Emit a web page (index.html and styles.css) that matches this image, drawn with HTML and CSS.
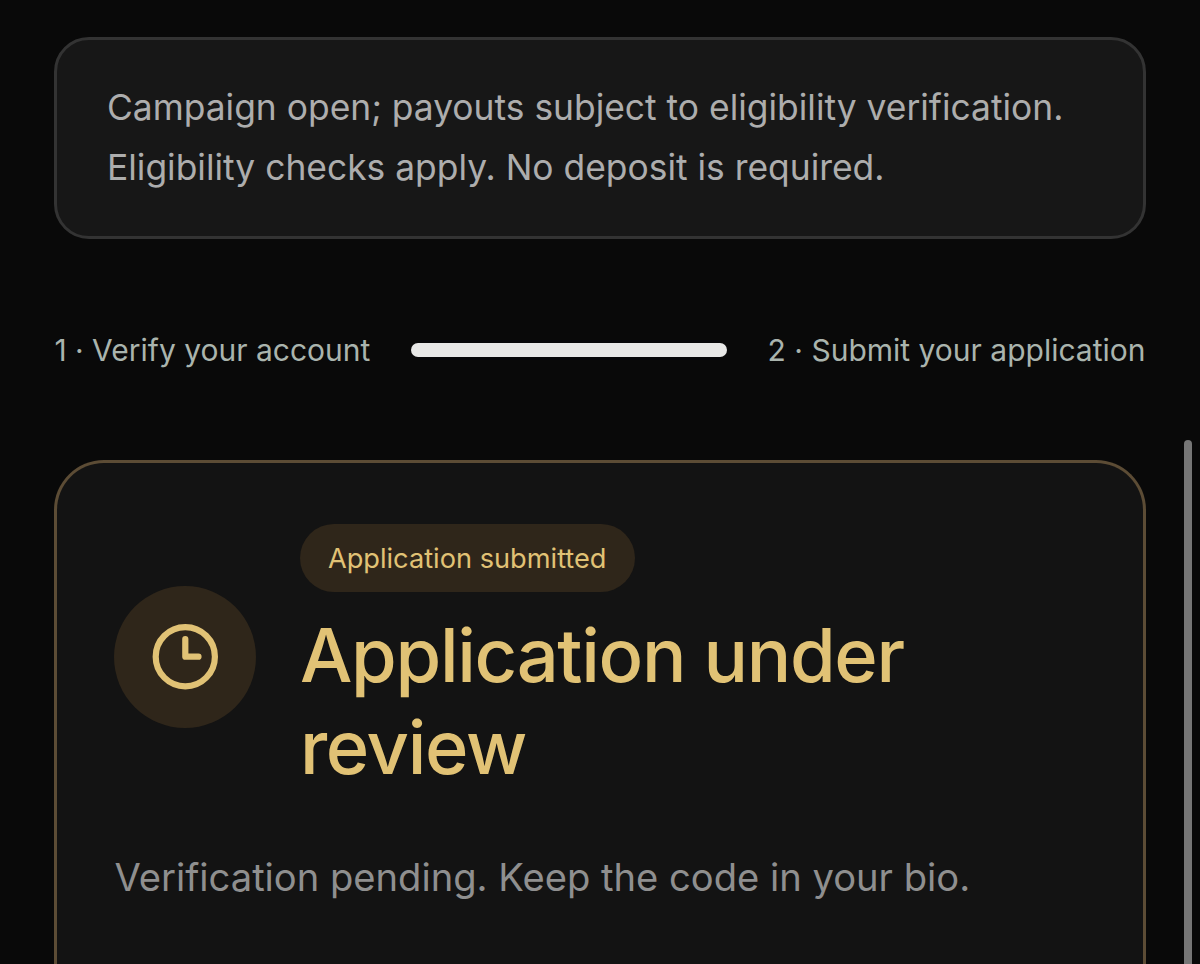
FILE: index.html
```html
<!DOCTYPE html>
<html lang="en">
<head>
<meta charset="utf-8">
<title>Campaign application</title>
<link rel="stylesheet" href="styles.css">
</head>
<body>
<main class="page">
  <section class="notice">Campaign open; payouts subject to eligibility verification. Eligibility checks apply. No deposit is required.</section>
  <div class="steps">
    <span class="step step-first">1 · Verify your account</span>
    <span class="progress"></span>
    <span class="step step-second">2 · Submit your application</span>
  </div>
  <section class="card">
    <header class="status">
      <span class="status-icon">
        <svg width="72" height="72" viewBox="0 0 72 72" fill="none" stroke="currentColor" stroke-width="6.200" stroke-linecap="round" stroke-linejoin="round"><circle cx="36.300" cy="35.700" r="29.600"/><path d="M36.300 18V35.700H49.500"/></svg>
      </span>
      <div class="status-body">
        <span class="badge">Application submitted</span>
        <h1 class="title">Application under review</h1>
      </div>
    </header>
    <p class="hint">Verification pending. Keep the code in your bio.</p>
  </section>
</main>
<div class="scrollbar"></div>
</body>
</html>
```

FILE: styles.css
```css
* { box-sizing: border-box; }
html { height: 100%; overflow: hidden; }
body { margin: 0; height: 964px; overflow: hidden; background: #090909; font-family: Inter, sans-serif; }
.page { height: 964px; padding: 37px 54.500px 0 54.400px; display: flex; flex-direction: column; }
.notice { flex: none; height: 202px; padding: 38px 49px 38px 49.600px; border: 3px solid #333; border-radius: 35px; background: #171717; color: #adadad; font-size: 35.400px; line-height: 60px; }
.steps { flex: none; display: flex; align-items: center; height: 60px; margin-top: 81px; color: #aab4ad; font-size: 30px; line-height: 60px; white-space: nowrap; }
.progress { flex: 1; height: 14px; margin: 0 41px; border-radius: 7px; background: #e9e9e7; }
.card { flex: 1; margin-top: 80px; padding: 61px 57px 0; border: 3px solid #5c4c35; border-bottom: 0; border-radius: 50px 50px 0 0; background: #131313; }
.status { display: flex; align-items: center; gap: 43.500px; height: 265px; }
.status-icon { display: flex; flex: none; align-items: center; justify-content: center; width: 142px; height: 142px; border-radius: 50%; background: #2f261a; color: #e1c275; }
.status-body { height: 265px; width: 680px; }
.badge { display: inline-block; height: 68px; padding: 0 28px; border-radius: 34px; background: #2f261a; color: #e1c275; font-size: 27.200px; line-height: 69px; }
.title { margin: 17px 0 0; color: #e1c275; font-size: 74px; font-weight: 500; line-height: 92px; letter-spacing: -1.320px; }
.hint { margin: 56px 0 0; color: #8f8f8f; font-size: 38.150px; line-height: 64px; }
.scrollbar { position: absolute; top: 440px; left: 1184px; width: 8px; height: 524px; border-radius: 4px 4px 0 0; background: #767676; }
```
